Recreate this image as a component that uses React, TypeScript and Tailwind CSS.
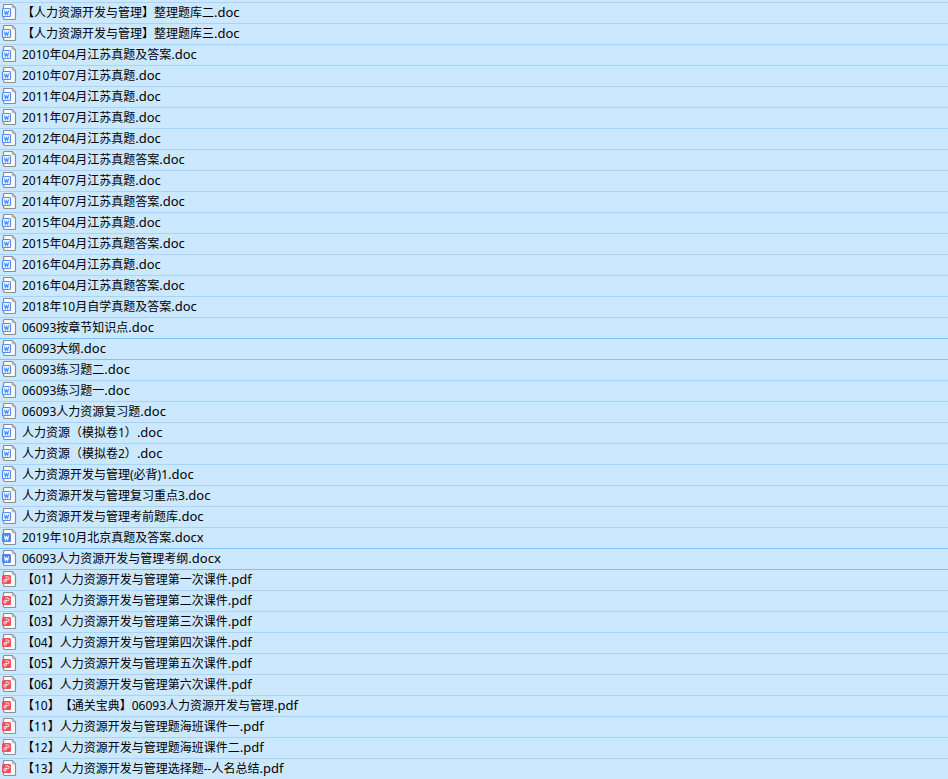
type Kind = "doc" | "docx" | "pdf";

const files: string[] = [
  "【人力资源开发与管理】整理题库二.doc",
  "【人力资源开发与管理】整理题库三.doc",
  "2010年04月江苏真题及答案.doc",
  "2010年07月江苏真题.doc",
  "2011年04月江苏真题.doc",
  "2011年07月江苏真题.doc",
  "2012年04月江苏真题.doc",
  "2014年04月江苏真题答案.doc",
  "2014年07月江苏真题.doc",
  "2014年07月江苏真题答案.doc",
  "2015年04月江苏真题.doc",
  "2015年04月江苏真题答案.doc",
  "2016年04月江苏真题.doc",
  "2016年04月江苏真题答案.doc",
  "2018年10月自学真题及答案.doc",
  "06093按章节知识点.doc",
  "06093大纲.doc",
  "06093练习题二.doc",
  "06093练习题一.doc",
  "06093人力资源复习题.doc",
  "人力资源（模拟卷1）.doc",
  "人力资源（模拟卷2）.doc",
  "人力资源开发与管理(必背)1.doc",
  "人力资源开发与管理复习重点3.doc",
  "人力资源开发与管理考前题库.doc",
  "2019年10月北京真题及答案.docx",
  "06093人力资源开发与管理考纲.docx",
  "【01】人力资源开发与管理第一次课件.pdf",
  "【02】人力资源开发与管理第二次课件.pdf",
  "【03】人力资源开发与管理第三次课件.pdf",
  "【04】人力资源开发与管理第四次课件.pdf",
  "【05】人力资源开发与管理第五次课件.pdf",
  "【06】人力资源开发与管理第六次课件.pdf",
  "【10】【通关宝典】06093人力资源开发与管理.pdf",
  "【11】人力资源开发与管理题海班课件一.pdf",
  "【12】人力资源开发与管理题海班课件二.pdf",
  "【13】人力资源开发与管理选择题--人名总结.pdf",
];

// Files whose outline is drawn in the stronger blue.
const outlined = new Set(["06093大纲.doc", "06093人力资源开发与管理考纲.docx"]);

function FileIcon({ kind }: { kind: Kind }) {
  return (
    <svg className="size-4 shrink-0" viewBox="0 0 16 16" aria-hidden="true">
      <path
        d="M3.5 .5H11L14.5 4V14.5Q14.5 15.5 13.5 15.5H4.5Q2.5 15.5 2.5 14V1.5Q2.5 .5 3.5 .5Z"
        fill="#fcfcfc"
        stroke="#8b8f95"
        strokeWidth="1.2"
      />
      <path d="M11 1V3.2Q11 4 11.8 4H14L11 1Z" fill="#c3c7cc" stroke="#a5a9ae" strokeWidth=".5" />
      {kind === "doc" && (
        <>
          <rect x="1.5" y="4.5" width="8" height="8" rx="1" fill="#f4f9ff" stroke="#4f8cf4" strokeWidth="1.2" />
          <path d="M3.5 6.5L4.3 10.4L5.5 7.8L6.7 10.4L7.5 6.5" fill="none" stroke="#4f8cf4" strokeWidth="1.1" />
        </>
      )}
      {kind === "docx" && (
        <>
          <rect x="1" y="4" width="9" height="9" rx="1.5" fill="#4a86ee" />
          <path d="M3.5 6.5L4.3 10.4L5.5 7.8L6.7 10.4L7.5 6.5" fill="none" stroke="#fff" strokeWidth="1.1" />
        </>
      )}
      {kind === "pdf" && (
        <>
          <rect x="1" y="4" width="9" height="9" rx="1.5" fill="#ee5058" />
          <path
            d="M4.5 6H6.5Q8.3 6 8.3 7.3T6.5 8.7H4.2Q2.9 8.7 2.9 9.9T3.9 11.1Q5.2 11.1 5.2 9.6V7.6"
            fill="none"
            stroke="#fff"
            strokeWidth=".9"
          />
        </>
      )}
    </svg>
  );
}

function lineColor(index: number) {
  const strong = outlined.has(files[index]) || outlined.has(files[index - 1]);
  return strong ? "border-[#7cc2fc]" : "border-[#a5d5fd]";
}

export default function App() {
  return (
    <main className="min-h-screen bg-[#cce8ff] pt-0.5 text-xs text-black [font-variant-ligatures:none] [text-spacing-trim:space-all] font-['Noto_Sans','Noto_Sans_CJK_SC',sans-serif]">
      <ul>
        {files.map((name, index) => {
          const dot = name.lastIndexOf(".");
          return (
            <li
              key={name}
              className={`flex h-[21px] items-start gap-[5px] overflow-hidden border-t pl-px pt-px ${lineColor(index)}`}
            >
              <FileIcon kind={name.slice(dot + 1) as Kind} />
              <span className="whitespace-nowrap leading-4">
                {name.slice(0, dot)}
                <span className="text-[13px]">{name.slice(dot)}</span>
              </span>
            </li>
          );
        })}
      </ul>
    </main>
  );
}
